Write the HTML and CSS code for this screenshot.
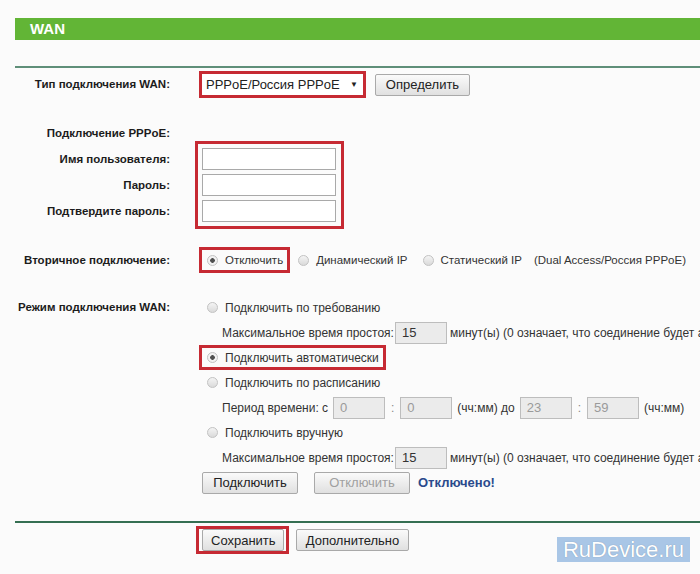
FILE: index.html
```html
<!DOCTYPE html>
<html lang="ru">
<head>
    <meta charset="UTF-8">
    <title>WAN</title>
    <link rel="stylesheet" href="styles.css">
</head>
<body>
<div class="page">

    <div class="title-bar">WAN</div>
    <div class="rule"></div>

    <div class="row row-type">
        <div class="label">Тип подключения WAN:</div>
        <div class="field">
            <div class="hl hl-select">
                <div class="select"><span>PPPoE/Россия PPPoE</span><span class="arrow">&#9660;</span></div>
            </div>
            <button class="btn btn-detect">Определить</button>
        </div>
    </div>

    <div class="row row-pppoe">
        <div class="labels">
            <div class="label">Подключение PPPoE:</div>
            <div class="label">Имя пользователя:</div>
            <div class="label">Пароль:</div>
            <div class="label">Подтвердите пароль:</div>
        </div>
        <div class="field">
            <div class="hl hl-inputs">
                <input class="text" type="text">
                <input class="text" type="password">
                <input class="text" type="password">
            </div>
        </div>
    </div>

    <div class="row row-second">
        <div class="label">Вторичное подключение:</div>
        <div class="field">
            <div class="opt hl"><span class="radio on"></span>Отключить</div>
            <div class="opt"><span class="radio"></span>Динамический IP</div>
            <div class="opt"><span class="radio"></span>Статический IP</div>
            <span class="note">(Dual Access/Россия PPPoE)</span>
        </div>
    </div>

    <div class="row row-mode">
        <div class="label">Режим подключения WAN:</div>
        <div class="field lines">
            <div class="line"><div class="opt"><span class="radio"></span>Подключить по требованию</div></div>
            <div class="line indent">
                <span class="cap cap-idle">Максимальное время простоя:</span>
                <span class="num dark">15</span>
                <span class="after">минут(ы) (0 означает, что соединение будет активно всегда)</span>
            </div>
            <div class="line"><div class="opt hl"><span class="radio on"></span>Подключить автоматически</div></div>
            <div class="line"><div class="opt"><span class="radio"></span>Подключить по расписанию</div></div>
            <div class="line indent period">
                <span class="cap cap-period">Период времени: с</span>
                <span class="num">0</span>
                <span class="colon">:</span>
                <span class="num">0</span>
                <span>(чч:мм) до</span>
                <span class="num">23</span>
                <span class="colon">:</span>
                <span class="num">59</span>
                <span>(чч:мм)</span>
            </div>
            <div class="line"><div class="opt"><span class="radio"></span>Подключить вручную</div></div>
            <div class="line indent">
                <span class="cap cap-idle">Максимальное время простоя:</span>
                <span class="num dark">15</span>
                <span class="after">минут(ы) (0 означает, что соединение будет активно всегда)</span>
            </div>
            <div class="line actions">
                <button class="btn btn-wide">Подключить</button>
                <button class="btn btn-wide" disabled>Отключить</button>
                <span class="status">Отключено!</span>
            </div>
        </div>
    </div>

    <div class="rule rule-bottom"></div>

    <div class="save-row">
        <div class="hl hl-save"><button class="btn btn-save">Сохранить</button></div>
        <button class="btn btn-more">Дополнительно</button>
    </div>

    <div class="watermark">RuDevice.ru</div>
</div>
</body>
</html>
```

FILE: styles.css
```css
body {
    margin: 0;
    background: #fbfbfb;
    font-family: "Liberation Sans", Arial, sans-serif;
    font-size: 12px;
    color: #333;
}

.page {
    position: relative;
    width: 685px;
    height: 574px;
    padding-left: 15px;
    overflow: hidden;
    white-space: nowrap;
}

.title-bar {
    margin-top: 18px;
    height: 22px;
    line-height: 22px;
    padding-left: 15px;
    background: #62b536;
    color: #fff;
    font-weight: bold;
    font-size: 15px;
}

.rule {
    margin-top: 26px;
    border-top: 2px solid #5f8f79;
}

.rule-bottom {
    border-top-color: #356f52;
}

/* label column + field column */
.row {
    display: flex;
    align-items: flex-start;
}

.label,
.labels {
    flex: none;
    width: 155px;
}

.label {
    text-align: right;
    font-weight: bold;
    font-size: 11.5px;
    color: #1c1c1c;
}

.field {
    display: flex;
    align-items: center;
    min-width: 0;
    margin-left: 25px;
}

/* red highlight frames */
.hl {
    border: 3px solid #c62a33;
}

.row-type {
    margin-top: 3px;
}

.row-type .label {
    line-height: 27px;
}

.hl-select {
    margin-left: 4px;
}

.select {
    display: flex;
    align-items: center;
    justify-content: space-between;
    width: 161px;
    height: 21px;
    box-sizing: border-box;
    padding: 0 5px 0 4px;
    background: #fff;
    font-size: 13px;
    color: #222;
}

.select .arrow {
    font-size: 8px;
}

.btn {
    flex: none;
    height: 22px;
    padding: 0 8px;
    border: 1px solid #a9a9a9;
    border-radius: 2px;
    background: linear-gradient(#fafafa, #e0e0e0);
    font-family: inherit;
    font-size: 13px;
    color: #222;
}

.btn:disabled {
    color: #a0a0a0;
}

.btn-detect {
    margin-left: 9px;
    width: 95px;
}

.row-pppoe {
    margin-top: 22px;
}

.row-pppoe .label {
    height: 26px;
    line-height: 26px;
}

.row-pppoe .field {
    margin-top: 21px;
}

.hl-inputs {
    display: flex;
    flex-direction: column;
    gap: 4px;
    padding: 4px 5px 4px 4px;
}

.text {
    width: 134px;
    height: 22px;
    box-sizing: border-box;
    margin: 0;
    border: 1px solid #a9a9a9;
    background: #fff;
}

.row-second {
    margin-top: 18px;
}

.row-second .label {
    line-height: 26px;
}

.row-second .field {
    font-size: 11.5px;
}

.row-second .opt {
    height: 26px;
}

.row-second .opt.hl {
    margin-left: 4px;
}

.opt {
    display: inline-flex;
    flex: none;
    align-items: center;
    gap: 7px;
    height: 25px;
    box-sizing: border-box;
    padding: 0 4px 0 5px;
    border: 3px solid transparent;
    color: #333;
}

.opt.hl {
    border-color: #c62a33;
}

.radio {
    flex: none;
    width: 11px;
    height: 11px;
    box-sizing: border-box;
    border: 1px solid #c2c2c2;
    border-radius: 50%;
    background: linear-gradient(#f4f4f4, #dadada);
}

.radio.on {
    background: radial-gradient(circle, #505050 0 2px, #f2f2f2 2.6px);
}

.note {
    margin-left: 5px;
}

.row-mode {
    margin-top: 22px;
}

.row-mode .label {
    line-height: 25px;
}

.lines {
    flex-direction: column;
    align-items: flex-start;
}

.line {
    display: flex;
    align-items: center;
    height: 25px;
}

.line > * {
    flex: none;
}

.line .opt {
    margin-left: 4px;
}

.indent {
    padding-left: 27px;
}

.cap-idle {
    width: 173px;
}

.cap-period {
    width: 106px;
}

.num {
    width: 52px;
    height: 22px;
    line-height: 20px;
    box-sizing: border-box;
    padding-left: 6px;
    border: 1px solid #bdbdbd;
    background: #ebebeb;
    font-size: 13px;
    color: #9a9a9a;
}

.num.dark {
    color: #333;
}

.after {
    margin-left: 3px;
}

.period {
    gap: 5px;
}

.period .colon {
    margin: 0 1px;
    color: #888;
}

.actions {
    padding-left: 7px;
}

.btn-wide {
    width: 96px;
}

.actions .btn + .btn {
    margin-left: 16px;
}

.status {
    margin-left: 8px;
    font-weight: bold;
    font-size: 13px;
    color: #2a4a8c;
}

.save-row {
    display: flex;
    align-items: center;
    height: 28px;
    margin-top: 3px;
    padding-left: 181px;
}

.hl-save {
    padding: 0 2px 0 3px;
}

.btn-save {
    width: 82px;
}

.btn-more {
    width: 113px;
    margin-left: 7px;
}

.watermark {
    position: absolute;
    left: 557px;
    top: 537px;
    width: 133px;
    height: 25px;
    line-height: 25px;
    text-align: center;
    background: #a9c6e6;
    color: #fff;
    font-size: 22px;
    text-shadow: 0 0 1px #6f8aa6;
}
```
